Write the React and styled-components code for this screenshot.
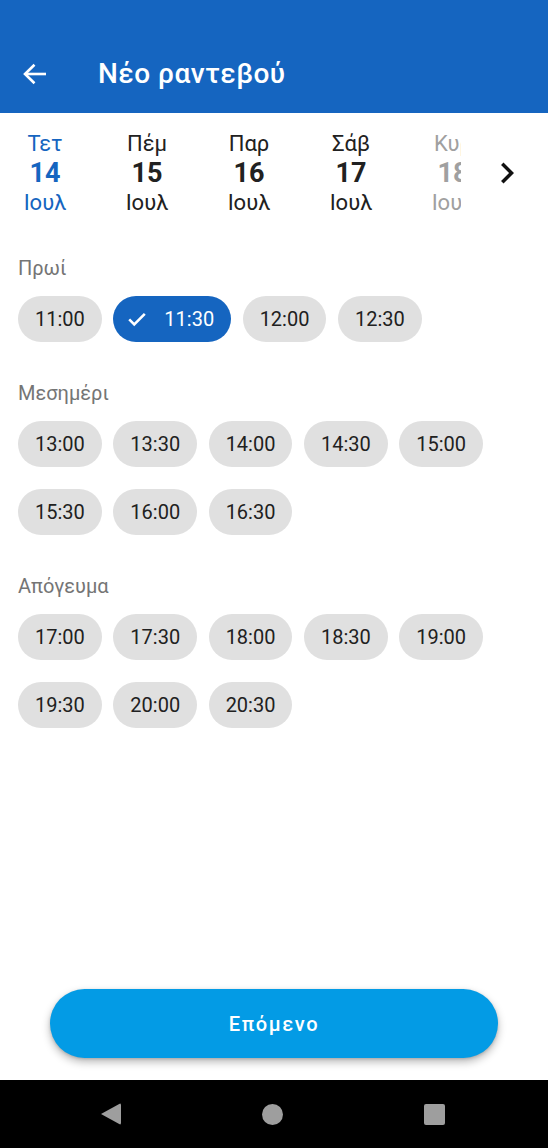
import React from 'react';
import styled, { createGlobalStyle } from 'styled-components';

const BLUE = '#1565c0';

const GlobalStyle = createGlobalStyle`
  html, body {
    margin: 0;
    padding: 0;
    background: #ffffff;
    font-family: Roboto, "Noto Sans", "Liberation Sans", sans-serif;
  }
  * {
    box-sizing: border-box;
  }
`;

const DAYS = [
    { name: 'Τετ', date: '14', month: 'Ιουλ', state: 'active' },
    { name: 'Πέμ', date: '15', month: 'Ιουλ' },
    { name: 'Παρ', date: '16', month: 'Ιουλ' },
    { name: 'Σάβ', date: '17', month: 'Ιουλ' },
    { name: 'Κυρ', date: '18', month: 'Ιουλ', state: 'faded' },
];

const SECTIONS = [
    { title: 'Πρωί', slots: ['11:00', '11:30', '12:00', '12:30'] },
    {
        title: 'Μεσημέρι',
        slots: ['13:00', '13:30', '14:00', '14:30', '15:00', '15:30', '16:00', '16:30'],
    },
    {
        title: 'Απόγευμα',
        slots: ['17:00', '17:30', '18:00', '18:30', '19:00', '19:30', '20:00', '20:30'],
    },
];

const SELECTED = '11:30';

const BackArrow = () => (
    <svg width="26" height="22" viewBox="0 0 26 22" fill="none">
        <path d="M3 11H24" stroke="white" strokeWidth="2.6" />
        <path d="M12.5 1.8L3 11L12.5 20.2" stroke="white" strokeWidth="2.6" />
    </svg>
);

const ChevronRight = () => (
    <svg width="42" height="42" viewBox="0 0 24 24">
        <path d="M10 6L8.59 7.41 13.17 12l-4.58 4.59L10 18l6-6z" fill="#111" />
    </svg>
);

const CheckIcon = () => (
    <svg width="22" height="22" viewBox="0 0 24 24" fill="none">
        <path d="M3.5 12.5L9 18L20.5 6.5" stroke="white" strokeWidth="2.8" />
    </svg>
);

const App = () => {
    return (
        <Screen>
            <GlobalStyle />
            <AppBar>
                <BackButton>
                    <BackArrow />
                </BackButton>
                <Title>Νέο ραντεβού</Title>
            </AppBar>

            <DayStrip>
                <DayScroller>
                    {DAYS.map((day) => (
                        <DayColumn key={day.date} $state={day.state}>
                            <DayName>{day.name}</DayName>
                            <DayNumber>{day.date}</DayNumber>
                            <DayMonth>{day.month}</DayMonth>
                        </DayColumn>
                    ))}
                </DayScroller>
                <NextDays>
                    <ChevronRight />
                </NextDays>
            </DayStrip>

            <Content>
                {SECTIONS.map((section) => (
                    <Section key={section.title}>
                        <SectionLabel>{section.title}</SectionLabel>
                        <ChipGrid>
                            {section.slots.map((slot) => {
                                const selected = slot === SELECTED;
                                return (
                                    <Chip key={slot} $selected={selected}>
                                        {selected && <CheckIcon />}
                                        {slot}
                                    </Chip>
                                );
                            })}
                        </ChipGrid>
                    </Section>
                ))}
            </Content>

            <Footer>
                <NextButton>Επόμενο</NextButton>
            </Footer>

            <NavBar>
                <NavBack />
                <NavHome />
                <NavRecents />
            </NavBar>
        </Screen>
    );
};

const Screen = styled.div`
  display: flex;
  flex-direction: column;
  height: 100vh;
  overflow: hidden;
`;

const AppBar = styled.header`
  display: flex;
  align-items: center;
  gap: 50px;
  height: 113px;
  padding: 34px 0 0 22px;
  background: ${BLUE};
  color: white;
  flex-shrink: 0;
`;

const BackButton = styled.button`
  display: flex;
  padding: 0;
  border: none;
  background: none;

  svg {
    display: block;
  }
`;

const Title = styled.h1`
  margin: 0;
  font-size: 28px;
  font-weight: 500;
  letter-spacing: 0.5px;
`;

const DayStrip = styled.div`
  display: flex;
  align-items: center;
  padding-top: 16px;
`;

const DayScroller = styled.div`
  display: flex;
  gap: 12px;
  width: 461px;
  overflow: hidden;
  flex-shrink: 0;
`;

const DayColumn = styled.div`
  display: flex;
  flex-direction: column;
  align-items: center;
  width: 90px;
  flex-shrink: 0;
  color: ${(p) =>
    p.$state === 'active' ? BLUE : p.$state === 'faded' ? '#a0a0a0' : '#212121'};
`;

const DayName = styled.span`
  font-size: 22px;
  line-height: 29px;
`;

const DayNumber = styled.span`
  font-size: 27px;
  font-weight: 700;
  line-height: 30px;
`;

const DayMonth = styled.span`
  font-size: 22px;
  line-height: 29px;
`;

const NextDays = styled.div`
  flex: 1;
  display: flex;
  justify-content: center;
  padding-left: 5px;

  svg {
    display: block;
  }
`;

const Content = styled.main`
  flex: 1;
  display: flex;
  flex-direction: column;
  gap: 39px;
  padding: 39px 18px 0;
`;

const Section = styled.section`
  display: flex;
  flex-direction: column;
  gap: 16px;
`;

const SectionLabel = styled.h2`
  margin: 0;
  font-size: 20px;
  font-weight: 400;
  line-height: 24px;
  color: #757575;
`;

const ChipGrid = styled.div`
  display: flex;
  flex-wrap: wrap;
  column-gap: 11.5px;
  row-gap: 22px;
`;

const Chip = styled.button`
  display: flex;
  align-items: center;
  gap: 16px;
  height: 46px;
  padding: ${(p) => (p.$selected ? '0 17px 0 13px' : '0 17px')};
  border: none;
  border-radius: 23px;
  background: ${(p) => (p.$selected ? BLUE : '#e0e0e0')};
  color: ${(p) => (p.$selected ? '#ffffff' : '#212121')};
  font-family: inherit;
  font-size: 20px;
  line-height: 1;

  svg {
    display: block;
  }
`;

const Footer = styled.div`
  padding: 0 50px 22px;
`;

const NextButton = styled.button`
  display: block;
  width: 100%;
  height: 69px;
  border: none;
  border-radius: 35px;
  background: #039be5;
  color: white;
  font-family: inherit;
  font-size: 20px;
  font-weight: 500;
  letter-spacing: 1.6px;
  box-shadow: 0 4px 8px rgba(0, 0, 0, 0.28), 0 1px 3px rgba(0, 0, 0, 0.15);
`;

const NavBar = styled.nav`
  display: flex;
  align-items: center;
  justify-content: space-between;
  height: 68px;
  padding: 0 103px 0 101px;
  background: #000000;
  flex-shrink: 0;
`;

const NavBack = styled.span`
  width: 20px;
  height: 22px;
  background: #9e9e9e;
  clip-path: polygon(100% 0, 100% 100%, 0 50%);
  border-radius: 2px;
`;

const NavHome = styled.span`
  width: 21px;
  height: 21px;
  border-radius: 50%;
  background: #9e9e9e;
`;

const NavRecents = styled.span`
  width: 21px;
  height: 21px;
  border-radius: 2px;
  background: #9e9e9e;
`;

export default App;
